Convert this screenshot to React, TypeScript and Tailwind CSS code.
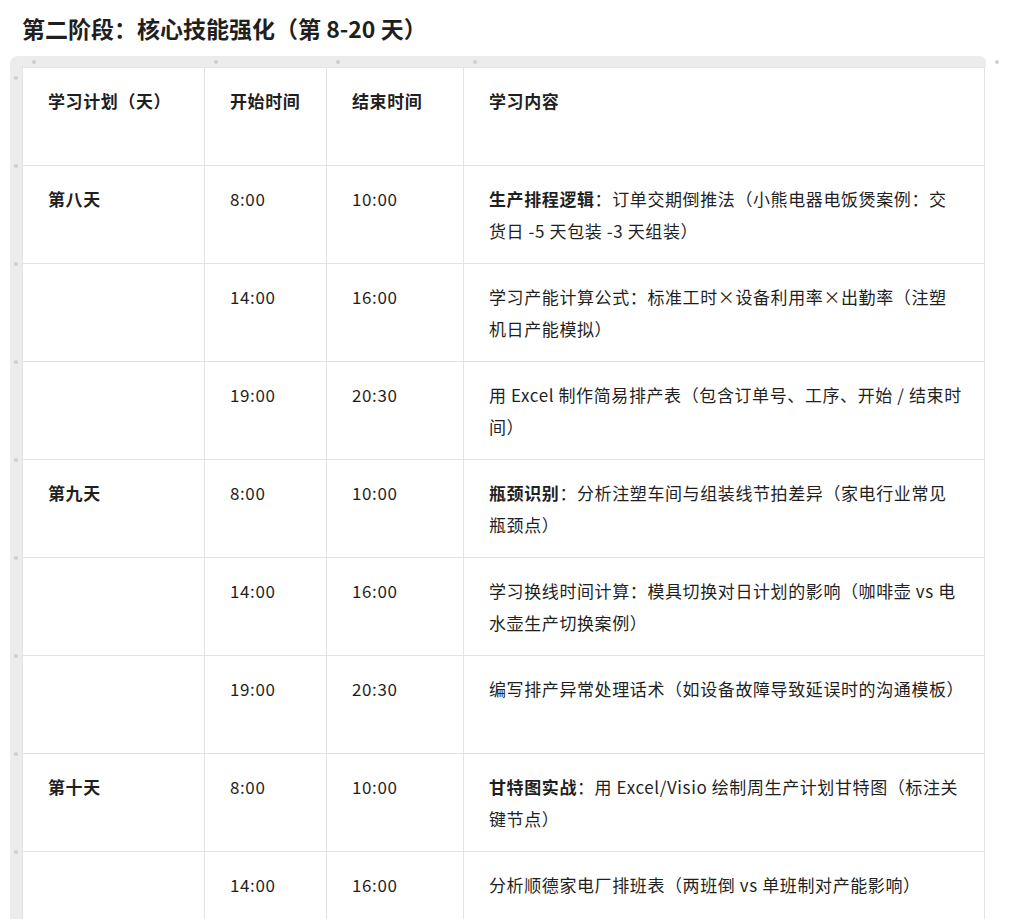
const rows: { day?: string; s: string; e: string; b?: string; t: string }[] = [
  { day: "第八天", s: "8:00", e: "10:00", b: "生产排程逻辑", t: "：订单交期倒推法（小熊电器电饭煲案例：交货日 -5 天包装 -3 天组装）" },
  { s: "14:00", e: "16:00", t: "学习产能计算公式：标准工时×设备利用率×出勤率（注塑机日产能模拟）" },
  { s: "19:00", e: "20:30", t: "用 Excel 制作简易排产表（包含订单号、工序、开始 / 结束时间）" },
  { day: "第九天", s: "8:00", e: "10:00", b: "瓶颈识别", t: "：分析注塑车间与组装线节拍差异（家电行业常见瓶颈点）" },
  { s: "14:00", e: "16:00", t: "学习换线时间计算：模具切换对日计划的影响（咖啡壶 vs 电水壶生产切换案例）" },
  { s: "19:00", e: "20:30", t: "编写排产异常处理话术（如设备故障导致延误时的沟通模板）" },
  { day: "第十天", s: "8:00", e: "10:00", b: "甘特图实战", t: "：用 Excel/Visio 绘制周生产计划甘特图（标注关键节点）" },
  { s: "14:00", e: "16:00", t: "分析顺德家电厂排班表（两班倒 vs 单班制对产能影响）" },
  { s: "19:00", e: "20:30", t: "整理本周学习笔记" },
];

const cell = "border-r border-b border-[#e3e3e3] pl-[25px] pr-[22px] pt-[17px] pb-[16px] align-top";

export default function App() {
  return (
    <div className="h-[919px] overflow-hidden bg-white text-[#1f1f1f]" style={{ fontFamily: '"Noto Sans CJK SC", "Noto Sans", sans-serif' }}>
      <h1 className="pl-[22px] pt-[9px] text-[23px] font-bold leading-[38px]">第二阶段：核心技能强化（第 8-20 天）</h1>
      <div className="ml-[10px] mt-[9px] flex w-[976px]">
        <div className="relative w-[12px] shrink-0 rounded-tl-[8px] bg-[#ececec]">
          {[20, 108, 206, 304, 402, 500, 598, 696, 794].map((y) => (
            <span key={y} className="absolute left-[4px] h-[4px] w-[4px] rounded-full bg-[#cfcfcf]" style={{ top: y }} />
          ))}
        </div>
        <div className="flex-1">
          <div className="relative h-[11px] rounded-tr-[6px] bg-[#ececec]">
            {[10, 192, 314, 451, 973].map((x) => (
              <span key={x} className="absolute top-[4px] h-[4px] w-[4px] rounded-full bg-[#cfcfcf]" style={{ left: x }} />
            ))}
          </div>
          <table className="w-[963px] table-fixed border-collapse border-l border-t border-[#e3e3e3] text-[17px] leading-[32px] tracking-[0.6px]">
            <colgroup>
              <col className="w-[182px]" />
              <col className="w-[122px]" />
              <col className="w-[137px]" />
              <col />
            </colgroup>
            <thead>
              <tr className="h-[98px] font-bold">
                <th className={cell + " text-left"}>学习计划（天）</th>
                <th className={cell + " text-left"}>开始时间</th>
                <th className={cell + " text-left"}>结束时间</th>
                <th className={cell + " text-left"}>学习内容</th>
              </tr>
            </thead>
            <tbody>
              {rows.map((r, i) => (
                <tr key={i} className="h-[98px]">
                  <td className={cell + " font-bold"}>{r.day}</td>
                  <td className={cell}>{r.s}</td>
                  <td className={cell}>{r.e}</td>
                  <td className={cell}>
                    {r.b && <b>{r.b}</b>}
                    {r.t}
                  </td>
                </tr>
              ))}
            </tbody>
          </table>
        </div>
      </div>
    </div>
  );
}
